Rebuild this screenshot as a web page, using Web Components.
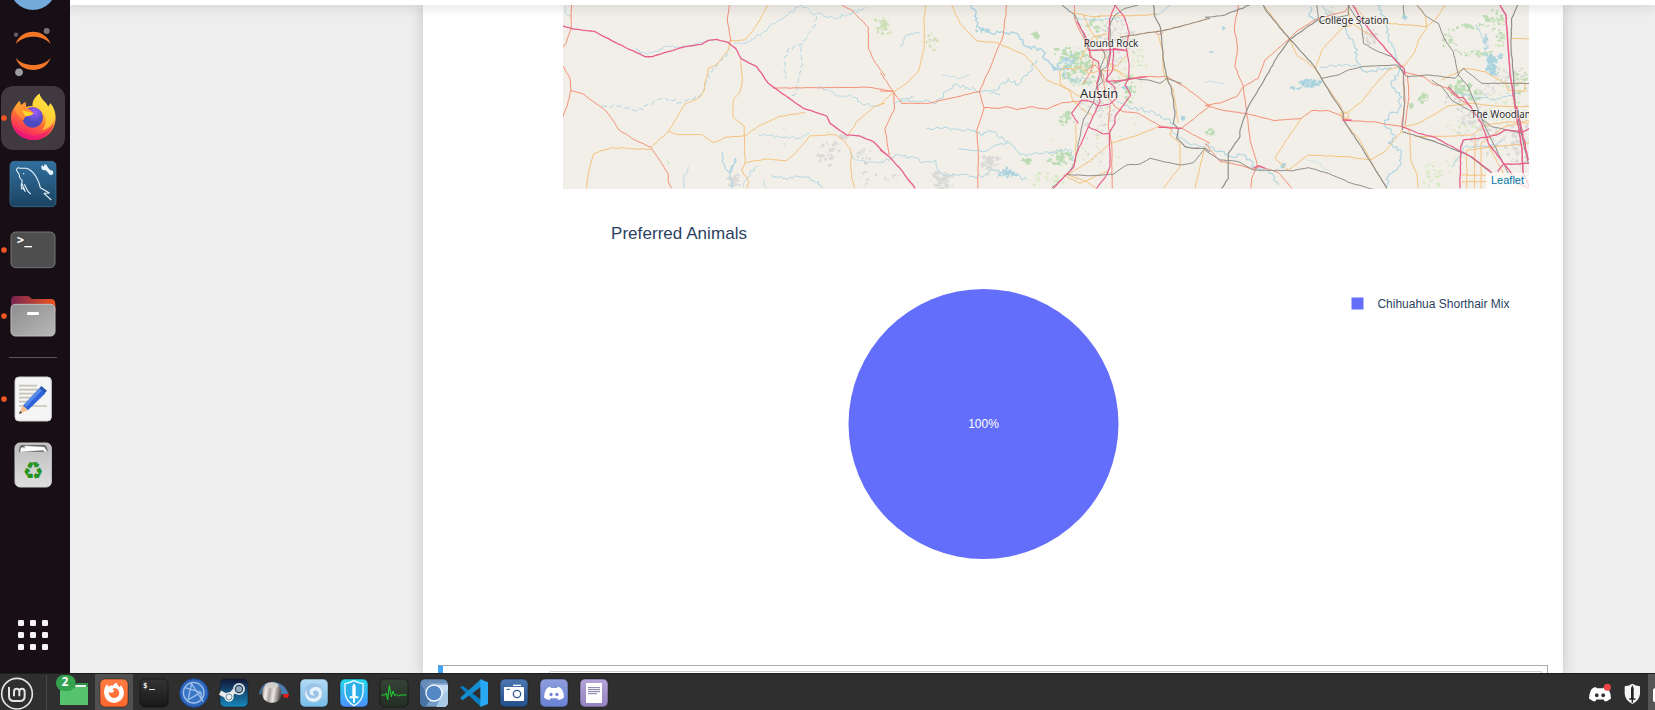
<!DOCTYPE html>
<html lang="en">
<head>
<meta charset="utf-8">
<title>Desktop</title>
<style>html,body{margin:0;height:100%;overflow:hidden;background:#eee}</style>
</head>
<body>
<desktop-shell>
  <app-dock slot="dock"></app-dock>
  <notebook-page slot="main">
    <geo-map></geo-map>
    <pie-chart heading="Preferred Animals" label="Chihuahua Shorthair Mix" value="100%"></pie-chart>
  </notebook-page>
  <task-bar slot="bar"></task-bar>
</desktop-shell>
<script>
const define = (name, render) => customElements.define(name, class extends HTMLElement {
  connectedCallback() {
    if (this.shadowRoot) return;
    const t = document.createElement('template');
    t.innerHTML = render(this);
    this.attachShadow({ mode: 'open' }).append(t.content.cloneNode(true));
  }
});

/* Each icon: [viewBox, markup]. One CSS pixel is three icon units. */
const tile = (x, y, a, b, id, s = '#111') => `<defs><linearGradient id="${id}" x2="0" y2="1"><stop stop-color="${a}"/><stop offset="1" stop-color="${b}"/></linearGradient></defs><rect x="${x}" y="${y}" width="84" height="84" rx="15" fill="url(#${id})" stroke="${s}" stroke-opacity=".45" stroke-width="3"/>`;
const dot = y => `<circle cx="12" cy="${y}" r="8.5" fill="#ee5622"/>`;
const discord = (x, y, k, c, e) => `<g transform="translate(${x} ${y}) scale(${k})"><path fill="${c}" d="M-13-21Q-24-19-27-13Q-34 0-34 15Q-25 23-15 24L-11 18H11L15 24Q25 23 34 15Q34 0 27-13Q20-20 13-21L10-17H-10Z"/><ellipse cx="-10" cy="5" rx="5.5" ry="6" fill="${e}"/><ellipse cx="10" cy="5" rx="5.5" ry="6" fill="${e}"/></g>`;
const icons = {
  browser: ['0 -138 198 192', `<circle cx="99" cy="-39" r="69" fill="#74a9dc"/>`],
  jupyter: ['0 60 198 192', `<path d="M47 133C61 83 137 83 152 133C130 103 70 103 47 133ZM47 173C61 222 137 222 152 173C130 202 70 202 47 173Z" fill="#f37726"/><circle cx="140" cy="93" r="9" fill="#767677"/><circle cx="48" cy="104" r="6.5" fill="#616262"/><circle cx="57" cy="217" r="11.500" fill="#9e9e9e"/>`],
  firefox: ['0 258 198 192', `<defs><linearGradient id="a" x1=".8" y1="0" x2=".35" y2="1"><stop stop-color="#fff44f"/><stop offset=".35" stop-color="#ffc02e"/><stop offset=".62" stop-color="#ff6b36"/><stop offset=".85" stop-color="#f8335c"/><stop offset="1" stop-color="#e31587"/></linearGradient><radialGradient id="b" cx=".6" cy=".25"><stop stop-color="#a35cfa"/><stop offset="1" stop-color="#4a4bc0"/></radialGradient><linearGradient id="c" y2="1"><stop stop-color="#ffad32"/><stop offset="1" stop-color="#ff7139"/></linearGradient></defs><rect x="3" y="258" width="192" height="192" rx="36" fill="#403a40"/>${dot(354)}<path fill="url(#a)" d="M33 350C34 333 44 318 58 302L62 316L76 307L78 321Q88 317 98 318C96 302 106 289 119 281C121 298 138 304 145 320L151 310C162 323 167 338 167 353C166 393 137 420 101 420C62 420 32 391 33 350Z"/><path d="M119 281C121 298 138 304 145 320L151 310C162 323 166 338 164 353C160 377 139 388 127 390C147 363 133 338 119 329C105 321 94 318 99 308Q106 289 119 281Z" fill="#ffdd3d" opacity=".72"/><circle cx="98" cy="352" r="31" fill="url(#b)"/><path fill="url(#c)" d="M44 326L60 303L62 316L76 307L79 323Q91 327 101 340Q95 347 79 349Q71 354 71 361C57 353 50 340 44 326Z"/><path d="M66 332Q82 331 101 340Q93 349 76 349Z" fill="#ffd52d"/><path d="M39 375Q66 408 103 407Q144 402 161 370Q145 418 101 420Q59 419 39 375Z" fill="#ed1474" opacity=".65"/>`],
  workbench: ['0 456 198 192', `<defs><linearGradient id="a" x2="0" y2="1"><stop stop-color="#31709f"/><stop offset="1" stop-color="#1b4361"/></linearGradient></defs><rect x="30" y="484" width="138" height="136" rx="13" fill="url(#a)" stroke="#3d789f" stroke-width="2"/><path d="M76 575Q68 560 65 567Q62 554 67 541Q57 535 58 524L49 510Q51 500 60 505L78 505Q96 509 110 533Q119 550 121 563L148 579L132 580L154 600M76 575L65 549M73 553Q85 580 93 582M71 519V523" fill="none" stroke="#eaf6fc" stroke-width="3.2" stroke-linejoin="round"/><path d="M135 501L150 517" stroke="#ecf6fc" stroke-width="10"/><circle cx="133" cy="502" r="9" fill="#e8f4fc"/><circle cx="153" cy="518" r="7" fill="#e8f4fc"/><path d="M121 491L132 500L134 488Z" fill="#2d6995"/>`],
  terminal: ['0 9 198 192', `${dot(105)}<rect x="33" y="51" width="132" height="107" rx="14" fill="#4e4e4e" stroke="#747474" stroke-width="3"/><text x="50" y="88" font-family="DejaVu Sans Mono" font-size="36" font-weight="bold" fill="#fff" textLength="23">&gt;</text><rect x="73" y="93" width="23" height="4" fill="#fff"/>`],
  files: ['0 207 198 192', `<defs><linearGradient id="a"><stop stop-color="#762450"/><stop offset="1" stop-color="#ef5420"/></linearGradient><linearGradient id="b" x2="1" y2="1"><stop stop-color="#8d8d8d"/><stop offset="1" stop-color="#b8b8b8"/></linearGradient></defs>${dot(303)}<path d="M33 291V256Q33 243 47 243H82Q88 243 96 252H152Q166 252 166 267V291Z" fill="url(#a)"/><rect x="33" y="268" width="132" height="95" rx="13" fill="url(#b)" stroke="#c1c1c1" stroke-width="3"/><rect x="81" y="291" width="36" height="9" rx="3" fill="#fff"/>`],
  editor: ['0 456 198 192', `${dot(552)}<rect x="45" y="486" width="109" height="132" rx="12" fill="#f5f5f5" stroke="#d0d0d0" stroke-width="3"/><path d="M57 512H111M57 524H122M57 536H122M57 548H122M57 560H86M57 573H141" stroke="#c5c2b7" stroke-width="5"/><path d="M68 573L118 520L136 535L84 586Z" fill="#2e63db"/><path d="M73 568L122 517L128 524L77 576Z" fill="#568bed"/><path d="M118 520L124 513L141 527L134 535Z" fill="#2856b5"/><path d="M68 571L57 597L84 586Z" fill="#f4c090"/><path d="M60 588L57 597L67 593Z" fill="#414141"/>`],
  trash: ['0 654 198 192', `<defs><linearGradient id="a" x2="0" y2="1"><stop stop-color="#bdbdbd"/><stop offset="1" stop-color="#dedede"/></linearGradient></defs><rect x="45" y="684" width="109" height="132" rx="15" fill="url(#a)" stroke="#cecece" stroke-width="3"/><path d="M56 711L60 694Q61 690 70 690H133Q141 690 143 710Z" fill="#666"/><path d="M60 711L63 698L78 696L71 703L75 692L133 696L142 710L134 711L130 706Z" fill="#fff" stroke="#aaa"/><text x="99" y="793" text-anchor="middle" font-family="DejaVu Sans" font-size="71" fill="#259321">♻</text>`],
  grid: ['0 9 198 192', [0,1,2].map(r => [0,1,2].map(c => `<rect x="${54+c*36}" y="${60+r*36}" width="18" height="18" rx="4" fill="#f4f2f3"/>`).join('')).join('')],
  firefoxTask: ['285 222 114 108', `<rect x="285" y="222" width="114" height="108" fill="#505050"/>${tile(300,237,'#ff7c43','#ff672e','a')}<path fill="#fff" fill-rule="evenodd" d="M312 278Q312 262 321 253L325 260Q331 255 338 257Q343 250 350 248Q352 256 359 262L363 255Q372 267 372 280Q369 307 342 309Q315 307 312 278ZM326 277Q328 293 342 294Q357 292 358 278Q355 265 344 264L337 267L343 273Q339 280 326 277Z"/>`],
  termTask: ['405 222 114 108', `${tile(420,237,'#343434','#191919','a','#000')}<text x="429" y="264" font-family="DejaVu Sans Mono" font-weight="bold" font-size="23" fill="#eee">$</text><rect x="447" y="267" width="18" height="3" fill="#ddd"/>`],
  compass: ['525 222 114 108', `<circle cx="582" cy="279" r="43" fill="#2e67bd" stroke="#1b448a" stroke-width="3"/><circle cx="581" cy="278" r="31" fill="#3976c6" stroke="#a3c1e9" stroke-width="4"/><path d="M555 263L603 277M603 277L561 301M573 248L600 291L610 305M575 250L564 300M603 277V297" stroke="#9bbeeb" stroke-width="4" fill="none"/>`],
  steam: ['-15 42 114 108', `${tile(0,57,'#11183a','#1688bc','a')}<path d="M0 98L26 111L45 90" fill="none" stroke="#e6e8ea" stroke-width="14"/><circle cx="57" cy="87" r="18" fill="#dce3e9"/><circle cx="57" cy="87" r="11" fill="#8fa5b8" stroke="#24405f" stroke-width="3.500"/><circle cx="27" cy="111" r="14" fill="#eee"/><circle cx="27" cy="111" r="9" fill="none" stroke="#537c95" stroke-width="2.500"/>`],
  knob: ['105 42 114 108', `<defs><linearGradient id="a" x2="1" y2=".15"><stop stop-color="#77716f"/><stop offset=".25" stop-color="#f2efed"/><stop offset=".45" stop-color="#a9a29f"/><stop offset=".65" stop-color="#eeeae8"/><stop offset="1" stop-color="#5f5756"/></linearGradient></defs><path d="M120 103C124 74 145 67 163 68Q194 73 203 103" fill="none" stroke="#43709f" stroke-width="6"/><path d="M175 73Q201 83 201 103H184Z" fill="#4c7cae"/><path d="M127 104Q125 84 137 74Q152 63 174 72Q184 84 184 105Q180 131 151 128Q129 124 127 104Z" fill="url(#a)"/><ellipse cx="155" cy="76" rx="20" ry="9" fill="#d1cdca"/><path d="M190 103L207 101L204 115L189 111Z" fill="#e61919"/>`],
  wave: ['225 42 114 108', `${tile(240,57,'#b3dbf5','#76bce8','a')}<circle cx="281" cy="99" r="29" fill="#9cc3e5"/><path d="M259 88A25 25 0 1 0 305 95C305 78 277 76 270 91C266 103 277 110 286 105C278 104 276 95 283 92C292 89 299 97 296 106C290 119 268 119 262 104Q257 97 259 88Z" fill="#eef8ff" opacity=".92"/>`],
  sword: ['345 42 114 108', `${tile(360,57,'#24d8ec','#4c90ff','a')}<path d="M402 62Q414 70 429 71V99Q426 125 402 137Q378 124 375 98V71Q390 69 402 62Z" fill="#2caee9" stroke="#eefaff" stroke-width="4"/><path d="M402 70L407 78V109H415V115H405V128H399V115H389V109H397V78Z" fill="#fff"/>`],
  monitor: ['465 42 114 108', `${tile(480,57,'#364335','#232e24','a','#000')}<path d="M484 105H494L499 99L503 119L508 77L514 110L519 93L524 107L529 103L535 108L540 105H560" fill="none" stroke="#22d737" stroke-width="3"/>`],
  chromium: ['15 72 114 108', `${tile(30,87,'#648bb7','#769dc7','a')}<path d="M48 101H114V103H70Z" fill="#c6dced"/><path d="M30 99L61 148L47 171Q31 171 31 157Z" fill="#4873a7"/><path d="M79 104H114V157Q114 171 99 171H80L94 139Z" fill="#c4dbef"/><path d="M96 137L79 171H101Q114 170 114 154V119Z" fill="#a7c9e6"/><circle cx="72" cy="129" r="24" fill="#5388c5" stroke="#f3f9ff" stroke-width="4"/>`],
  code: ['135 72 114 108', `<path d="M150 112L158 107L217 152V170L210 168Z" fill="#087dc1"/><path d="M150 144L158 151L217 107V87L209 91Z" fill="#168ed1"/><path d="M211 88L234 97V162L211 171Z" fill="#29a9f2"/>`],
  camera: ['255 72 114 108', `${tile(270,87,'#4b76b2','#244f88','a')}<rect x="282" y="111" width="60" height="42" rx="2" fill="#fff"/><path d="M309 106H333" stroke="#fff" stroke-width="4"/><path d="M290 118H300" stroke="#355c92" stroke-width="3"/><circle cx="321" cy="132" r="11" fill="#fff" stroke="#315b94" stroke-width="4"/>`],
  chat: ['375 72 114 108', `${tile(390,87,'#8e9ddd','#6a82d5','a')}${discord(432,129,.88,'#fff','#7085d4')}`],
  notes: ['495 72 114 108', `${tile(510,87,'#b4a4d9','#9482bd','a')}<rect x="528" y="99" width="48" height="60" fill="#fff"/><path d="M534 113H570M534 119H570M534 125H570M534 131H561" stroke="#695b91" stroke-width="2.500"/>`]
};
define('app-icon', el => {
  const [box, body] = icons[el.getAttribute('name')];
  return `<style>:host{display:block;line-height:0}svg{display:block;width:100%;height:100%}</style><svg viewBox="${box}">${body}</svg>`;
});

define('desktop-shell', () => `<style>
:host{display:grid;grid-template:673px 37px / 70px 1fr;width:1655px;height:710px;overflow:hidden;font-family:"Liberation Sans",Arial,sans-serif}
.main{min-width:0;overflow:hidden;display:grid}.bar{grid-column:1/-1;min-width:0;display:grid;z-index:2}.dock{display:grid;min-height:0}
</style><div class="dock"><slot name="dock"></slot></div><div class="main"><slot name="main"></slot></div><div class="bar"><slot name="bar"></slot></div>`);

define('app-dock', () => {
  const i = n => `<app-icon name="${n}"></app-icon>`;
  return `<style>:host{display:flex;flex-direction:column;gap:2px;background:#180e15;overflow:hidden;height:673px;box-sizing:border-box;padding-bottom:6px}
app-icon{width:66px;height:64px;flex:none}app-icon:first-of-type{margin-top:-46px}hr{width:48px;height:1px;margin:7px 9px;border:0;background:#5a5458;flex:none}app-icon.end{margin-top:auto}</style>
${['browser','jupyter','firefox','workbench','terminal','files'].map(i).join('')}<hr>${i('editor')}${i('trash')}<app-icon class="end" name="grid"></app-icon>`;
});

define('notebook-page', () => `<style>
:host{display:flex;flex-direction:column;background:#eee;height:673px}
header{height:5px;flex:none;background:#fff;box-shadow:0 0 12px 1px rgba(87,87,87,.25);z-index:1;position:relative}
.paper{margin:0 92px 0 353px;background:#fff;flex:1;box-shadow:0 0 12px 1px rgba(87,87,87,.25);display:flex;flex-direction:column}
.out{margin:0 34px 0 140px;height:660px;overflow:hidden}
.cell{margin:0 15px;height:8px;box-sizing:border-box;border:1px solid #ababab;border-left:5px solid #42a5f5;border-bottom:0;padding:5px 5px 0 106px}
.input{height:2px;box-sizing:border-box;border:1px solid #cfcfcf;border-bottom:0;border-radius:2px 2px 0 0}
</style><header></header><div class="paper"><div class="out"><slot></slot></div><div class="cell"><div class="input"></div></div></div>`);

/* Map features, drawn in three adjoining strips of 975 units. */
let seed = 7;
const rnd = () => (seed = (seed * 16807) % 2147483647) / 2147483647;
const rough = (s, amp) => {
  const n = s.trim().split(/[ ,]+/).map(Number);
  let d = `M${n[0]} ${n[1]}`;
  for (let i = 2; i < n.length; i += 2) {
    const dx = n[i] - n[i-2], dy = n[i+1] - n[i-1], len = Math.hypot(dx, dy) || 1, k = Math.max(1, Math.round(len / (amp > 3 ? 7 : 12)));
    for (let j = 1; j <= k; j++) {
      const o = j === k ? 0 : (rnd() - .5) * 2 * amp;
      d += `L${(n[i-2] + dx*j/k - dy/len*o).toFixed(1)} ${(n[i-1] + dy*j/k + dx/len*o).toFixed(1)}`;
    }
  }
  return d;
};
const blobs = (list, color) => list.map(([x, y, rx, ry, n, s = 8]) => {
  let out = '';
  for (let i = 0; i < n * 1.5; i++) {
    const a = rnd()*6.283, r = Math.pow(rnd(), .65), cx = x + Math.cos(a)*r*rx, cy = y + Math.sin(a)*r*ry, q = s*(.25 + rnd()*.75);
    let p = '';
    for (let j = 0; j < 9; j++) { const t = j*.698, z = q*(.35 + rnd()*.95); p += `${(cx + Math.cos(t)*z).toFixed(1)},${(cy + Math.sin(t)*z*.85).toFixed(1)} `; }
    out += `<polygon points="${p}"/>`;
  }
  return `<g fill="${color}">${out}</g>`;
}).join('');
const G = '#bcdcb4', LG = '#d8eac4', U = '#dadad8', W = '#aad3df';
const areas = [
  blobs([[975,80,18,28,14,7]], '#cfe0b8') + blobs([[825,460,40,40,17,8],[930,465,25,25,12,7],[930,535,45,30,13,6],[540,542,24,18,14,9],[863,408,14,10,9,7],[688,435,5,6,4,4]], U) + blobs([[688,388,5,5,3,4],[342,489,4,5,3,4],[820,399,6,4,3,4]], LG),
  blobs([[15,80,22,28,12,7],[155,125,33,30,15,6]], '#cfe0b8') + blobs([[500,540,55,28,18,7]], LG) + blobs([[330,485,30,25,20,10],[190,540,45,25,22,10],[35,535,30,18,8,6],[350,520,30,20,7,6],[655,330,55,65,50,6],[715,120,55,70,70,6],[680,235,45,60,35,6],[650,440,35,50,13,5],[600,170,30,40,15,5]], U) + blobs([[590,195,55,45,40,10],[468,105,8,9,5,10],[552,160,28,23,10,9],[560,360,25,25,14,10],[540,470,40,27,18,10],[440,485,16,9,8,9],[745,265,20,45,16,8],[650,80,30,35,14,7],[600,235,50,25,16,8]], G) + blobs([[700,235,110,190,85,5],[620,470,130,90,34,5],[760,180,40,80,26,5]], LG) + blobs([[310,92,22,8,13,7],[380,520,35,15,20,8],[570,180,21,16,10,7],[540,205,26,7,7,7],[735,265,8,12,5,6],[910,352,5,5,3,7],[595,240,22,6,6,5]], W),
  blobs([[18,400,14,12,9,7],[735,120,22,45,18,6],[800,160,50,8,15,6],[800,80,45,8,15,6],[865,60,28,30,18,8],[885,120,12,35,15,6],[765,260,32,24,20,10],[655,292,18,16,10,8],[800,285,32,26,18,8],[620,320,7,9,5,7],[835,160,40,8,12,6],[940,250,30,60,16,7]], G) + blobs([[690,520,50,42,22,7],[790,380,65,40,22,6],[900,300,65,80,38,6],[890,110,40,80,20,5],[750,470,30,30,7,6]], LG) + blobs([[495,110,22,25,16,8],[800,345,50,30,26,7],[850,400,100,65,70,7],[905,230,60,35,30,6],[940,450,32,55,26,7],[760,300,45,20,16,7],[845,275,30,20,10,7],[385,35,20,16,9,6],[970,380,20,90,16,7],[150,505,15,8,6,5]], U) + blobs([[318,250,36,11,32,8],[275,264,18,4,8,6],[860,190,15,28,32,9],[843,135,7,38,20,5],[885,170,7,11,7,6],[865,218,14,9,8,7],[234,496,7,8,8,6],[600,53,10,7,7,6],[55,85,7,5,4,5],[20,155,6,5,4,4]], W)
];
/* [colour, width, roughness, points] */
const R = '#f58f75', O = '#f6c27b', P = '#e8608b', K = '#8f8d88', B = '#b0d6e2', N = '#a08a74';
const lines = [[
[B,2.5,5,'28 20 34 40 48 52'],[B,2.5,5,'245 142 255 158 290 160 340 138 380 142 440 128 480 120'],[B,2.5,6,'535 132 560 132 590 118 620 100 645 75 690 48 740 15 770 42 800 40 836 55 880 42 930 22'],[B,3,5,'785 50 770 90 735 135 698 150 688 185 693 235'],[B,3,4,'738 140 742 190 730 235 722 280 700 295'],[B,3,5,'140 318 200 318 250 332 320 295 380 308 420 295 450 270 460 225 490 190 525 150'],[B,2.5,5,'790 258 840 285 900 292 920 312 975 318'],[B,2.5,5,'610 403 680 412 740 412 762 400'],[B,2.5,5,'385 565 386 535 400 500'],[B,3.5,4,'500 458 506 490 525 520 542 475 525 520 530 565'],[B,2.5,5,'565 560 585 520 610 498'],[B,3,6,'650 525 690 535 740 532 790 545 805 565'],[B,2.5,4,'885 455 900 480 940 488 975 490'],[B,2.5,5,'628 542 635 565'],
[R,3,1.5,'50 15 48 85 35 125 24 142'],[R,3,1.5,'24 198 45 235 48 270 38 315 24 350'],[R,3,1,'48 272 85 282 155 335 192 390 240 420 288 442 340 522 340 545 350 565'],[R,3,1,'523 15 517 60 527 120 522 132'],[R,3,1,'860 15 890 30 940 82 940 145 962 190 990 228'],[R,3,1,'655 265 780 263 910 262 945 262 1017 275'],
[O,3,1.5,'640 15 600 82 570 120 528 122 520 148 485 195 460 205 448 255 448 270 430 295 390 312 370 345 340 395 288 442'],[O,3,1.5,'95 565 102 510 115 462 170 443 288 448'],[O,3,1.5,'340 393 370 404 442 404 475 428 510 412 570 408 610 378 670 350 750 338'],[O,3,1,'557 180 562 240 556 275 535 300 533 350 568 378 570 488 560 510 582 545 575 565'],[O,3,2,'570 488 632 477 695 482 725 455 765 407 845 405 870 425 887 450 890 535 900 565'],[O,3,1.5,'880 405 910 360 955 322 990 310'],
[P,4,.8,'24 78 55 87 120 95 170 122 245 158 270 170 292 170 340 155 390 140 440 133 460 121 485 118 520 128 542 145 558 176 605 200 640 250 710 300 745 325 815 348 825 370 875 405 915 408 955 425 990 460']],
[
[B,4.5,6,'275 15 292 55 290 80 330 98'],[B,4.5,7,'330 98 380 98 418 110 440 140 480 145 500 180 520 210 550 180 580 185'],[B,3,6,'570 185 545 225 580 248 625 235 630 260'],[B,3,4,'545 15 590 55 660 60 720 55'],[B,3,4,'60 140 80 105 120 95'],[B,3,6,'40 310 100 302 170 308 220 255 285 268 300 275 350 270 385 235 415 255 450 215 470 180'],[B,3,5,'60 300 100 290'],[B,3,5,'140 385 180 385 270 390 310 405 330 390 390 430 420 465 490 460 570 448 580 485'],[B,3,3,'235 445 310 455 350 435 385 428'],[B,3,6,'0 485 60 465 135 485 165 480 180 520 240 525 310 530 340 510 390 520 440 540'],[B,3,6,'710 305 760 325 820 335 880 370 880 400 930 435 975 440'],[B,3,4,'820 50 850 35 870 15'],[B,3,5,'330 275 360 285'],[B,2,4,'185 225 240 235 270 225'],
[R,3,1,'380 15 370 105 330 205 298 275 312 325 290 390 295 450 293 565'],[R,3,1,'0 217 40 275 65 310 145 310 210 295 298 275'],[R,3,1,'0 273 40 275 44 325 15 385 28 465'],[R,3,1.5,'312 323 360 325 380 320 410 329 450 320 500 328 545 308 625 300'],[R,3,1,'583 15 585 60 615 125 640 180 635 210 610 250'],[R,3,1,'620 212 645 195 670 225 675 280 705 320 730 335 775 340 845 380 905 385 960 415 990 430'],[R,3,1,'690 315 685 380 695 430 697 565'],[R,3,1,'700 245 780 230 860 230 920 265 990 318 930 365 905 385'],[R,3,1,'825 95 835 105 850 98'],
[O,3,1,'137 15 132 60 133 145 115 215 80 250 42 275 0 315'],[O,3,1,'215 15 240 70 290 123 350 128 435 165 500 240 565 268 600 290'],[O,3,1,'570 37 635 50 700 47 800 46 830 42'],[O,3,1,'610 45 630 90 660 130 685 190 730 230'],[O,3,2,'545 205 585 208 605 200 625 220 650 215 710 210 740 230'],[O,3,2,'540 210 540 250 570 275 580 305 600 320 640 350'],[O,3,1,'690 100 640 110 625 135 600 180'],[O,3,1,'745 160 710 200 690 190'],[O,3,1,'588 370 587 490'],[O,3,1,'560 525 620 490 690 430 775 405 835 380 875 384 870 405 900 430 900 500 850 565'],[O,3,1,'975 440 960 500 945 565'],[O,3,1,'560 523 620 545 650 565'],[O,3,1,'680 515 600 550 550 525'],[O,3,1,'835 110 848 150 850 215 860 240 880 270 895 370'],
[K,3,1,'545 15 585 45 610 100 625 150 670 150 675 170 660 205 668 245 650 260 640 310 610 360 602 400 583 490 565 520 515 565'],[K,3,1.5,'690 60 690 150 680 200 665 210 650 265'],[K,3,1,'560 523 620 527 700 523 740 495 780 492 810 475 850 485 905 495 940 488 975 445'],[K,3.5,1.5,'820 15 825 50 842 85 850 180 862 235 875 270 885 335 880 370 895 390 890 415 915 440 940 445 975 445 990 455'],[K,3,1,'700 250 750 235 805 240 840 250 860 235 905 250'],[N,3.5,.8,'720 112 780 102 850 92 915 75 990 55'],[K,3,1,'690 75 705 45 735 25 775 15'],
[P,3.5,1,'705 15 688 60 686 120 692 160 683 205 680 245 740 240 800 230'],[P,3.5,1,'590 65 615 105 628 145 630 170 655 185 660 215 650 250 660 305 625 380 588 465 582 500 520 565'],[P,3.5,1,'705 15 735 55 748 100 738 140 747 190 747 230 735 255 752 285 720 330 705 350 705 370 688 400 690 500 680 525 650 565'],[P,3.5,1,'628 152 700 148 738 152 700 145 698 210 678 240 703 260 710 295 690 312 655 318 640 307 605 300 575 340 595 370'],[P,3.5,1,'625 380 670 402 690 400'],[P,4,1,'0 450 28 470 60 505 105 565'],[P,3.5,1,'835 382 905 385']],
[
[B,4,7,'315 20 315 50 340 60'],[B,3.5,7,'350 15 370 45 400 60 425 95 450 145 460 190 480 215 560 205'],[B,3.5,7,'515 15 540 50 550 110 575 175 580 220 560 255 590 290 580 330 550 350 540 370 570 405 550 430 590 455 580 500 550 530 545 565'],[B,3.5,6,'0 435 50 455 80 470 120 465 150 500 200 520 220 555'],[B,3,5,'345 200 430 195 460 200'],[B,2,4,'0 245 60 250'],[B,3,4,'740 270 800 290 870 300 940 280'],[B,3,4,'810 75 830 110 845 140'],[B,3,4,'740 500 780 440 850 440 900 420'],[B,1.5,4,'300 475 340 490 380 520'],
[R,3,1,'100 15 88 85 98 145 90 200 115 260 125 335 135 420 150 470 157 500 140 535 138 565'],[R,3,1,'0 317 50 308 95 290 115 260 160 235 180 180 255 115 280 90 340 55 420 35 435 15'],[R,3,1,'0 315 50 330 120 340 210 362 290 355 320 332 370 332 410 348 430 362 500 365 590 380 600 300 595 215 655 230 680 250 730 265'],[R,3,1,'608 225 612 290 600 375'],[R,3,1,'0 430 45 485 80 490 145 508 165 500 220 517 260 565'],[R,3,1,'725 265 760 295 800 320'],
[O,3,1,'180 20 210 60 255 120 275 165 325 200 355 245 408 320 425 375 460 415 500 485'],[O,3,1,'440 75 410 85 350 150 332 205'],[O,3,1,'430 15 435 65 470 90 500 105'],[O,3,1,'450 20 490 65 550 70 665 80 690 60 720 15'],[O,3,1,'635 15 660 45 665 85 640 120 630 155 600 195'],[O,3,1,'600 195 550 210 500 265 470 305 430 335 410 345'],[O,3,1,'210 475 250 510 310 465 425 470 495 480 540 455 585 400 595 380'],[O,3,1,'210 475 240 425 290 355'],[O,3,1,'608 385 615 400 617 480 635 520 640 565'],[O,3,1,'595 380 640 370 690 342 730 318 800 310 870 318 975 320'],[O,3,1,'630 410 740 408 800 405 840 375 910 365 975 370'],[O,3,1,'710 240 780 205 840 215 900 250 960 250 960 275 910 270 900 245'],[O,3,1,'920 115 975 118'],[O,3,1,'770 525 880 525 975 525'],[O,3,1,'785 565 785 450 870 440 975 430'],[O,3,1,'808 565 810 410'],[O,3,1,'828 565 828 430 900 380 975 360'],[O,3,1,'850 435 900 530 960 565'],[O,3,1,'770 545 850 545'],[O,3,1,'405 340 415 335 430 340 430 355 410 355 405 340'],[O,3,1,'500 490 545 565'],
[K,3.5,1.5,'0 52 60 45 135 15'],[K,3.5,1,'175 15 185 35 255 118 325 195 355 245 415 340 415 360 465 435 500 490 545 565'],[K,3.5,1,'340 58 255 118 220 165 180 235 130 320 105 390 105 410 70 460 70 535 50 565'],[K,3,1,'350 235 400 225 430 210 470 200 575 195 605 230 675 225 750 235 775 205 830 250 975 250'],[K,3,1,'340 65 430 45 430 15 455 55 470 80 475 130 510 150 570 175 595 215 598 320 592 390'],[K,3,1,'335 15 340 60'],[K,3,1,'635 15 665 50 700 70 720 120 745 155 760 225 790 260 830 355 850 400 910 520'],[K,3,1,'0 450 45 480 100 485 145 510 265 512 310 503 370 520 440 550 505 568'],[K,3.5,1,'592 395 690 425 790 465 860 518'],[K,3,1,'680 240 710 260 740 300 800 335 860 380 950 400'],[K,3.5,1,'938 15 920 55 918 140 925 220 930 310 960 450 970 490'],[K,3,1,'595 15 597 45'],
[P,4,1,'443 15 470 60 510 110 575 185 597 205 600 225'],[P,3.5,1,'590 380 640 400 690 412 750 445 800 470 860 518'],[P,4,1,'412 360 440 360'],[P,4,1,'730 262 760 292 775 293 800 325 830 370 850 430 900 495 940 550 975 565'],[P,4.5,1,'885 15 903 45 908 120 915 220 930 320 950 440 955 520 975 565'],[P,4,1,'765 565 767 440 775 420 820 415 875 405 900 390 955 395 975 385'],[P,4,1,'878 515 895 493 975 490'],[P,4.5,1,'935 320 970 480'],[P,3.5,1,'145 505 160 497 180 505']]];
define('geo-map', () => {
  const strips = lines.map((set, i) => `<g transform="translate(${i*975})">${areas[i]}${set.map(([c,w,a,p], k) => `<path d="${rough(p,a)}" stroke="${c}" stroke-width="${w}" fill="none"${c === B && i === 0 && k > 2 && k < 6 ? ' stroke-dasharray="17 8"' : ''}/>`).join('')}</g>`).join('');
  const label = (x, y, s, w, t) => `<text x="${x}" y="${y}" font-size="${s}" textLength="${w}" lengthAdjust="spacingAndGlyphs">${t}</text>`;
  return `<style>:host{display:grid;width:966px;height:184px;overflow:hidden}svg{grid-area:1/1;display:block;background:#f2efe9}
text{font-family:"Noto Sans",sans-serif;fill:#2b2b2b;stroke:#fff;stroke-opacity:.65;stroke-width:5;paint-order:stroke;stroke-linejoin:round}
a{grid-area:1/1;align-self:end;justify-self:end;box-sizing:border-box;height:16px;padding:0 5px;font:11px/15px "Liberation Sans",Arial,sans-serif;color:#0078a8;background:rgba(255,255,255,.75);z-index:1}</style>
<svg width="966" height="184" viewBox="24 15 2898 552"><g stroke-linejoin="round" stroke-linecap="butt">${strips}</g>
${label(1586,141,30,164,'Round Rock')}${label(1575,294,39,115,'Austin')}${label(2291,72,30,210,'College Station')}${label(2748,353,30,211,'The Woodlands')}</svg><a>Leaflet</a>`;
});

define('pie-chart', el => `<style>:host{display:block;height:450px}svg{display:block;font-family:"Liberation Sans",Arial,sans-serif}</style>
<svg width="966" height="450"><text x="48" y="50" font-size="17" textLength="136" fill="#2a3f5f">${el.getAttribute('heading')}</text>
<circle cx="420.500" cy="235" r="135" fill="#636efa"/><text x="420.500" y="239" text-anchor="middle" font-size="12" fill="#fff">${el.getAttribute('value')}</text>
<rect x="788.500" y="108.500" width="12" height="12" fill="#636efa"/><text x="814.400" y="119" font-size="12" fill="#2a3f5f">${el.getAttribute('label')}</text></svg>`);

define('task-bar', () => `<style>
:host{display:flex;align-items:stretch;background:#2f2f2f;border-top:1px solid #1c1c1c;box-sizing:border-box;height:37px;overflow:hidden}
svg{display:block;flex:none}.apps{display:flex;gap:2px;flex:1}app-icon{width:38px;height:36px;flex:none}
</style>
<svg width="95" height="36" viewBox="0 222 285 108"><circle cx="51" cy="281" r="46" fill="none" stroke="#e4e4e4" stroke-width="5"/><path d="M27 261V288Q27 303 42 303H60Q74 303 74 288V275Q74 266 66 266Q58 266 58 275V289M58 275Q58 266 50 266Q42 266 42 275V289" fill="none" stroke="#e4e4e4" stroke-width="6"/><path d="M139.500 225V330" stroke="#484848" stroke-width="3"/>
<path d="M180 315V255H224L231 249H264V315Z" fill="#2f944b"/><path d="M226 255H258V263H226Z" fill="#eee"/><path d="M180 264H222L229 261H264V315H180Z" fill="#56c36f"/><rect x="168" y="225" width="59" height="48" rx="24" fill="#33a34f"/><text x="195" y="258" text-anchor="middle" font-family="Noto Sans" font-weight="bold" font-size="36" fill="#fff">2</text></svg>
<div class="apps">${['firefoxTask','termTask','compass','steam','knob','wave','sword','monitor','chromium','code','camera','chat','notes'].map(n => `<app-icon name="${n}"></app-icon>`).join('')}</div>
<svg width="75" height="36" viewBox="120 72 225 108">${discord(180,131,.97,'#fff','#2f2f2f')}<circle cx="202" cy="112" r="10.500" fill="#ef4444"/><path d="M277 101Q287 108 300 109V132Q298 151 277 162Q256 151 254 132V109Q268 108 277 101Z" fill="#f4f4f4"/><path d="M277 105L281 115V145H286V149H279V158H275V149H268V145H273V115Z" fill="#222"/><rect x="324" y="72" width="21" height="108" fill="#555"/><rect x="339" y="115" width="12" height="41" rx="5" fill="#fff"/></svg>`);
</script>
</body>
</html>
